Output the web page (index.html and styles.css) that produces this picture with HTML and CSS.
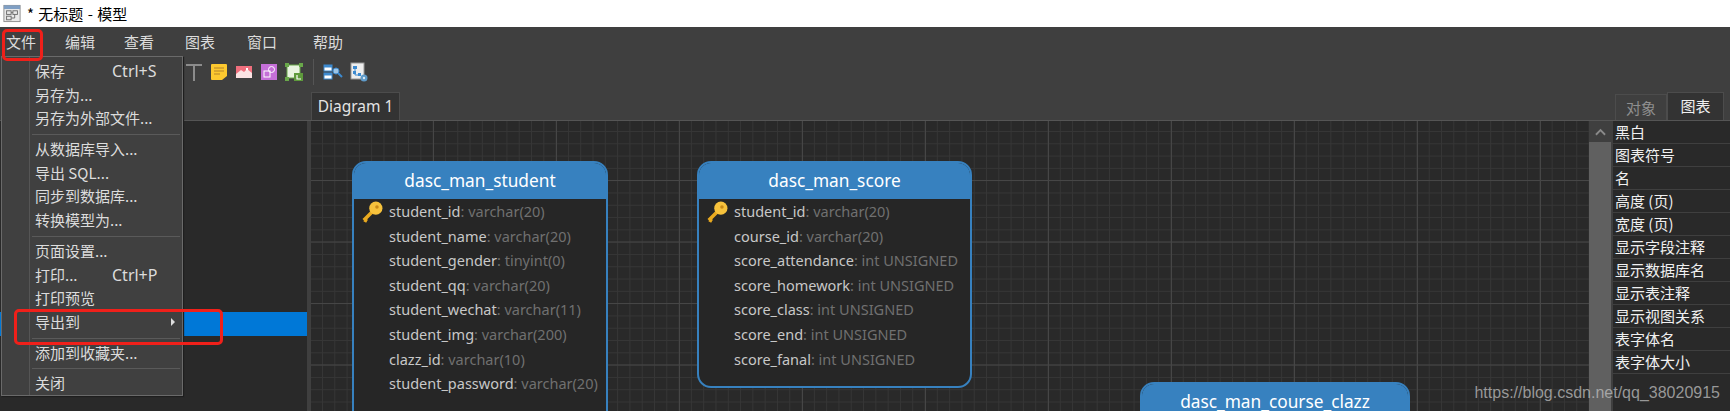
FILE: index.html
```html
<!DOCTYPE html>
<html lang="zh-CN">
<head>
  <meta charset="UTF-8" />
  <title>* 无标题 - 模型</title>
  <link rel="stylesheet" href="styles.css">
</head>
<body>
  <div class="window">
    <!-- Title bar -->
    <header class="titlebar">
      <svg class="app-icon" viewBox="0 0 20 20">
        <rect x="1" y="1" width="18" height="18" fill="#e8e8e8" stroke="#8a8a8a"/>
        <rect x="1" y="1" width="18" height="4" fill="#7f9fc4"/>
        <rect x="4" y="7" width="5" height="4" fill="none" stroke="#666"/>
        <rect x="11" y="7" width="5" height="4" fill="none" stroke="#666"/>
        <rect x="4" y="13" width="5" height="4" fill="none" stroke="#666"/>
        <path d="M9 9h2M9 15h4v-4" fill="none" stroke="#666"/>
      </svg>
      <span>* 无标题 - 模型</span>
    </header>

    <!-- Menu bar -->
    <nav class="menubar">
      <span class="menu-file">文件</span>
      <span class="menu-edit">编辑</span>
      <span class="menu-view">查看</span>
      <span class="menu-chart">图表</span>
      <span class="menu-window">窗口</span>
      <span class="menu-help">帮助</span>
    </nav>

    <!-- Toolbar -->
    <div class="toolbar">
      <svg class="tool" viewBox="0 0 20 20"><path d="M2 3h16M10 3v16" fill="none" stroke="#8c8c8c" stroke-width="2"/></svg>
      <svg class="tool" viewBox="0 0 20 20">
        <path d="M3 2h14a1 1 0 0 1 1 1v11l-5 4H3a1 1 0 0 1-1-1V3a1 1 0 0 1 1-1z" fill="#fdc92f"/>
        <path d="M5 6h10M5 9h10M5 12h6" stroke="#b5832a" stroke-width="1.2"/>
      </svg>
      <svg class="tool" viewBox="0 0 20 20">
        <rect x="2" y="4" width="16" height="12" fill="#ef6f7d"/>
        <path d="M2 12l5-4 3 2 3-3 5 4v5H2z" fill="#fbe3e3"/>
        <rect x="12" y="6" width="2" height="2" fill="#fff"/>
      </svg>
      <svg class="tool" viewBox="0 0 20 20">
        <rect x="2" y="2" width="16" height="16" fill="#c56fd8"/>
        <rect x="5" y="9" width="6" height="6" fill="none" stroke="#fff"/>
        <circle cx="12.5" cy="7.500" r="3" fill="none" stroke="#fff"/>
      </svg>
      <svg class="tool" viewBox="0 0 20 20">
        <rect x="3" y="3" width="13" height="13" fill="#e8f3e0" stroke="#69a84a"/>
        <path d="M1 1h4v4H1zM15 1h4v4h-4zM1 15h4v4H1z" fill="#69a84a"/>
        <rect x="10" y="11" width="9" height="8" fill="#5e9a3c"/>
        <path d="M13 13v4h4" fill="none" stroke="#fff" stroke-width="1.2"/>
      </svg>
      <span class="tool-sep"></span>
      <svg class="tool" viewBox="0 0 20 20">
        <rect x="1" y="3" width="8" height="6" fill="#fff" stroke="#3c8ad0"/>
        <rect x="1" y="3" width="8" height="2.500" fill="#3c8ad0"/>
        <rect x="1" y="11" width="8" height="6" fill="#fff" stroke="#3c8ad0"/>
        <rect x="1" y="11" width="8" height="2.500" fill="#3c8ad0"/>
        <circle cx="13" cy="9" r="3" fill="#9cc4e6" stroke="#3c8ad0"/>
        <path d="M15 11l4 4" stroke="#3c8ad0" stroke-width="2"/>
      </svg>
      <svg class="tool" viewBox="0 0 20 20">
        <rect x="3" y="1" width="13" height="16" fill="#eee" stroke="#999"/>
        <path d="M5 4h4v3H5zM5 9h3v3H5zM10 11h3v3h-3z" fill="#3c8ad0"/>
        <path d="M7 7v6h3" fill="none" stroke="#3c8ad0"/>
        <circle cx="16" cy="16" r="3.500" fill="#5f9bc9"/>
        <circle cx="16" cy="16" r="1.200" fill="#dbe9f4"/>
      </svg>
    </div>

    <!-- Tabs -->
    <div class="tabbar">
      <div class="tab tab-diagram">Diagram 1</div>
      <div class="side-tabs">
        <div class="side-tab">对象</div>
        <div class="side-tab side-tab-active">图表</div>
      </div>
    </div>

    <main class="workspace">
      <aside class="tree">
        <div class="tree-selected"></div>
      </aside>

      <section class="canvas">
        <div class="er-table er-student">
          <h3>dasc_man_student</h3>
          <ul>
            <li class="pk"><svg class="key" viewBox="0 0 20 20"><path d="M2.500 17.500l8-8M3 17l2.500 1.500" fill="none" stroke="#e8a91f" stroke-width="3.200"/><circle cx="13.500" cy="6.500" r="6" fill="#f7c23c"/><circle cx="14.500" cy="5.500" r="1.600" fill="#c98a17"/></svg>student_id<i>: varchar(20)</i></li>
            <li>student_name<i>: varchar(20)</i></li>
            <li>student_gender<i>: tinyint(0)</i></li>
            <li>student_qq<i>: varchar(20)</i></li>
            <li>student_wechat<i>: varchar(11)</i></li>
            <li>student_img<i>: varchar(200)</i></li>
            <li>clazz_id<i>: varchar(10)</i></li>
            <li>student_password<i>: varchar(20)</i></li>
          </ul>
        </div>

        <div class="er-table er-score">
          <h3>dasc_man_score</h3>
          <ul>
            <li class="pk"><svg class="key" viewBox="0 0 20 20"><path d="M2.500 17.500l8-8M3 17l2.500 1.500" fill="none" stroke="#e8a91f" stroke-width="3.200"/><circle cx="13.500" cy="6.500" r="6" fill="#f7c23c"/><circle cx="14.500" cy="5.500" r="1.600" fill="#c98a17"/></svg>student_id<i>: varchar(20)</i></li>
            <li>course_id<i>: varchar(20)</i></li>
            <li>score_attendance<i>: int UNSIGNED</i></li>
            <li>score_homework<i>: int UNSIGNED</i></li>
            <li>score_class<i>: int UNSIGNED</i></li>
            <li>score_end<i>: int UNSIGNED</i></li>
            <li>score_fanal<i>: int UNSIGNED</i></li>
          </ul>
        </div>

        <div class="er-table er-clazz">
          <h3>dasc_man_course_clazz</h3>
        </div>
      </section>

      <div class="scrollbar">
        <div class="scroll-up"><svg viewBox="0 0 12 8"><path d="M1 7l5-5 5 5" fill="none" stroke="#8a8a8a" stroke-width="2"/></svg></div>
        <div class="scroll-thumb"></div>
      </div>

      <aside class="props">
        <div>黑白</div>
        <div>图表符号</div>
        <div>名</div>
        <div>高度 (页)</div>
        <div>宽度 (页)</div>
        <div>显示字段注释</div>
        <div>显示数据库名</div>
        <div>显示表注释</div>
        <div>显示视图关系</div>
        <div>表字体名</div>
        <div>表字体大小</div>
      </aside>
    </main>

    <!-- Open file menu -->
    <div class="file-menu">
      <div class="item"><span>保存</span><kbd>Ctrl+S</kbd></div>
      <div class="item"><span>另存为...</span></div>
      <div class="item"><span>另存为外部文件...</span></div>
      <hr>
      <div class="item"><span>从数据库导入...</span></div>
      <div class="item"><span>导出 SQL...</span></div>
      <div class="item"><span>同步到数据库...</span></div>
      <div class="item"><span>转换模型为...</span></div>
      <hr>
      <div class="item"><span>页面设置...</span></div>
      <div class="item"><span>打印...</span><kbd>Ctrl+P</kbd></div>
      <div class="item"><span>打印预览</span></div>
      <div class="item has-sub"><span>导出到</span></div>
      <hr>
      <div class="item"><span>添加到收藏夹...</span></div>
      <hr>
      <div class="item"><span>关闭</span></div>
    </div>

    <div class="mark mark-file"></div>
    <div class="mark mark-export"></div>
    <div class="watermark">https://blog.csdn.net/qq_38020915</div>
  </div>
</body>
</html>
```

FILE: styles.css
```css
:root {
  --panel: #3f3f3f;
  --dark: #292929;
  --line: #4c4c4c;
  --blue: #3781bf;
  --text: #dcdcdc;
}

* {
  box-sizing: border-box;
  margin: 0;
  padding: 0;
}

html, body {
  overflow: hidden;
}

body {
  font-family: "Noto Sans CJK SC", "Noto Sans", sans-serif;
  background-color: var(--panel);
}

.window {
  position: relative;
  width: 1730px;
  height: 411px;
  overflow: hidden;
  background-color: var(--panel);
  color: var(--text);
}

/* Title bar */
.titlebar {
  height: 27px;
  background-color: #fff;
  color: #000;
  font-size: 15px;
  word-spacing: 1px;
  line-height: 27px;
  display: flex;
  align-items: center;
  padding-left: 3px;
}

.app-icon {
  width: 18px;
  height: 19px;
  margin-right: 6px;
}

/* Menu bar */
.menubar {
  height: 29px;
  display: flex;
  align-items: center;
  font-size: 15px;
  line-height: 29px;
  padding-left: 6px;
}

.menu-edit { margin-left: 29px; }
.menu-view { margin-left: 29px; }
.menu-chart { margin-left: 31px; }
.menu-window { margin-left: 32px; }
.menu-help { margin-left: 36px; }

/* Toolbar */
.toolbar {
  height: 36px;
  display: flex;
  align-items: center;
  padding-left: 184px;
}

.tool {
  width: 20px;
  height: 20px;
  margin-right: 5px;
  margin-top: -4px;
}

.tool-sep {
  width: 1px;
  height: 26px;
  background-color: #555;
  margin: -4px 9px 0 4px;
}

/* Tabs */
.tabbar {
  height: 28px;
  display: flex;
  align-items: flex-end;
  padding-left: 311px;
}

.tab {
  width: 89px;
  height: 28px;
  line-height: 27px;
  text-align: center;
  font-family: "Noto Sans", sans-serif;
  font-size: 15.500px;
  background-color: #333;
  border: 1px solid var(--line);
  border-bottom: none;
  color: #e4e4e4;
}

.side-tabs {
  margin-left: auto;
  margin-right: 6px;
  display: flex;
  align-items: flex-end;
}

.side-tab {
  width: 52px;
  height: 26px;
  font-size: 15px;
  line-height: 26px;
  text-align: center;
  color: #8f8f8f;
  border: 1px solid var(--line);
  border-bottom: none;
}

.side-tab-active {
  width: 57px;
  height: 28px;
  line-height: 25px;
  color: #f0f0f0;
  background-color: #333;
}

/* Main area */
.workspace {
  height: 291px;
  display: grid;
  grid-template-columns: 307px 1282px 22px 119px;
  border-top: 1px solid #555;
}

.tree {
  background-color: var(--dark);
  padding-top: 191px;
}

.tree-selected {
  height: 24px;
  background-color: #0078d7;
}

.canvas {
  position: relative;
  overflow: hidden;
  margin-left: 4px;
  background-color: var(--dark);
  background-image:
    linear-gradient(to right, #464646 1px, transparent 1px),
    linear-gradient(to bottom, #464646 1px, transparent 1px),
    linear-gradient(to right, #363636 1px, transparent 1px),
    linear-gradient(to bottom, #363636 1px, transparent 1px);
  background-size: 123px 100%, 100% 61.5px, 12.3px 100%, 100% 12.3px;
  background-position: 122px 0, 0 59px, 11px 0, 0 10px;
}

.scrollbar {
  background-color: #606060;
}

.scroll-up {
  height: 21px;
  background-color: var(--panel);
  display: flex;
  align-items: center;
  justify-content: center;
}

.scroll-up svg {
  width: 11px;
  height: 8px;
}

.props {
  margin-left: 2px;
  background-color: var(--dark);
  font-size: 15px;
  color: #f0f0f0;
}

.props div {
  height: 23px;
  line-height: 22px;
  padding-left: 2px;
  border-bottom: 1px solid var(--panel);
  white-space: nowrap;
}

/* ER tables sit at their own place on the diagram */
.er-table {
  position: absolute;
  background-color: #262626;
  border: 2px solid var(--blue);
  border-radius: 14px;
  overflow: hidden;
  font-family: "Noto Sans", sans-serif;
}

.er-table h3 {
  height: 37px;
  margin: -1px -2px 0;
  background-color: var(--blue);
  color: #fff;
  font-size: 17.300px;
  font-weight: 400;
  line-height: 38px;
  text-align: center;
}

.er-table ul {
  list-style: none;
  padding-top: 2px;
}

.er-table li {
  position: relative;
  height: 24.600px;
  line-height: 21px;
  font-size: 14.500px;
  color: #c8c8c8;
  white-space: nowrap;
}

.er-table i {
  font-style: normal;
  color: #707070;
}

.key {
  position: absolute;
  left: 7px;
  top: 0;
  width: 22px;
  height: 22px;
}

.er-student {
  left: 41px;
  top: 40px;
  width: 256px;
  height: 265px;
}

.er-student li { padding-left: 35px; }

.er-score {
  left: 386px;
  top: 40px;
  width: 275px;
  height: 227px;
}

.er-score li { padding-left: 35px; }

.er-clazz {
  left: 829px;
  top: 261px;
  width: 270px;
  height: 80px;
}

/* File menu */
.file-menu {
  position: absolute;
  left: 1px;
  top: 56px;
  width: 182px;
  height: 340px;
  padding-top: 3px;
  background-color: #404040;
  background-image: linear-gradient(to right, transparent 27px, #555 27px, #555 28px, transparent 28px);
  border: 1px solid #6a6a6a;
  box-shadow: 1px 1px 1px #1e1e1e;
  font-size: 15px;
  color: #dcdcdc;
}

.item {
  position: relative;
  height: 23.700px;
  line-height: 22px;
  padding-left: 33px;
  white-space: nowrap;
}

.item kbd {
  position: absolute;
  left: 110px;
  top: 0;
  font-family: "Noto Sans", sans-serif;
  font-size: 16px;
}

.has-sub::after {
  content: "";
  position: absolute;
  left: 169px;
  top: 7px;
  border-left: 4px solid #ddd;
  border-top: 4px solid transparent;
  border-bottom: 4px solid transparent;
}

.file-menu hr {
  border: none;
  height: 1px;
  background-color: #5a5a5a;
  margin: 3px 2px 3px 30px;
}

/* Red annotations */
.mark {
  position: absolute;
  border: 3px solid #f0201a;
  border-radius: 5px;
}

.mark-file {
  left: 2px;
  top: 29px;
  width: 41px;
  height: 32px;
}

.mark-export {
  left: 14px;
  top: 309px;
  width: 209px;
  height: 36px;
}

.watermark {
  position: absolute;
  right: 10px;
  top: 384px;
  font-family: "Liberation Sans", sans-serif;
  font-size: 16px;
  line-height: 18px;
  color: rgba(190, 190, 190, 0.75);
}
```
